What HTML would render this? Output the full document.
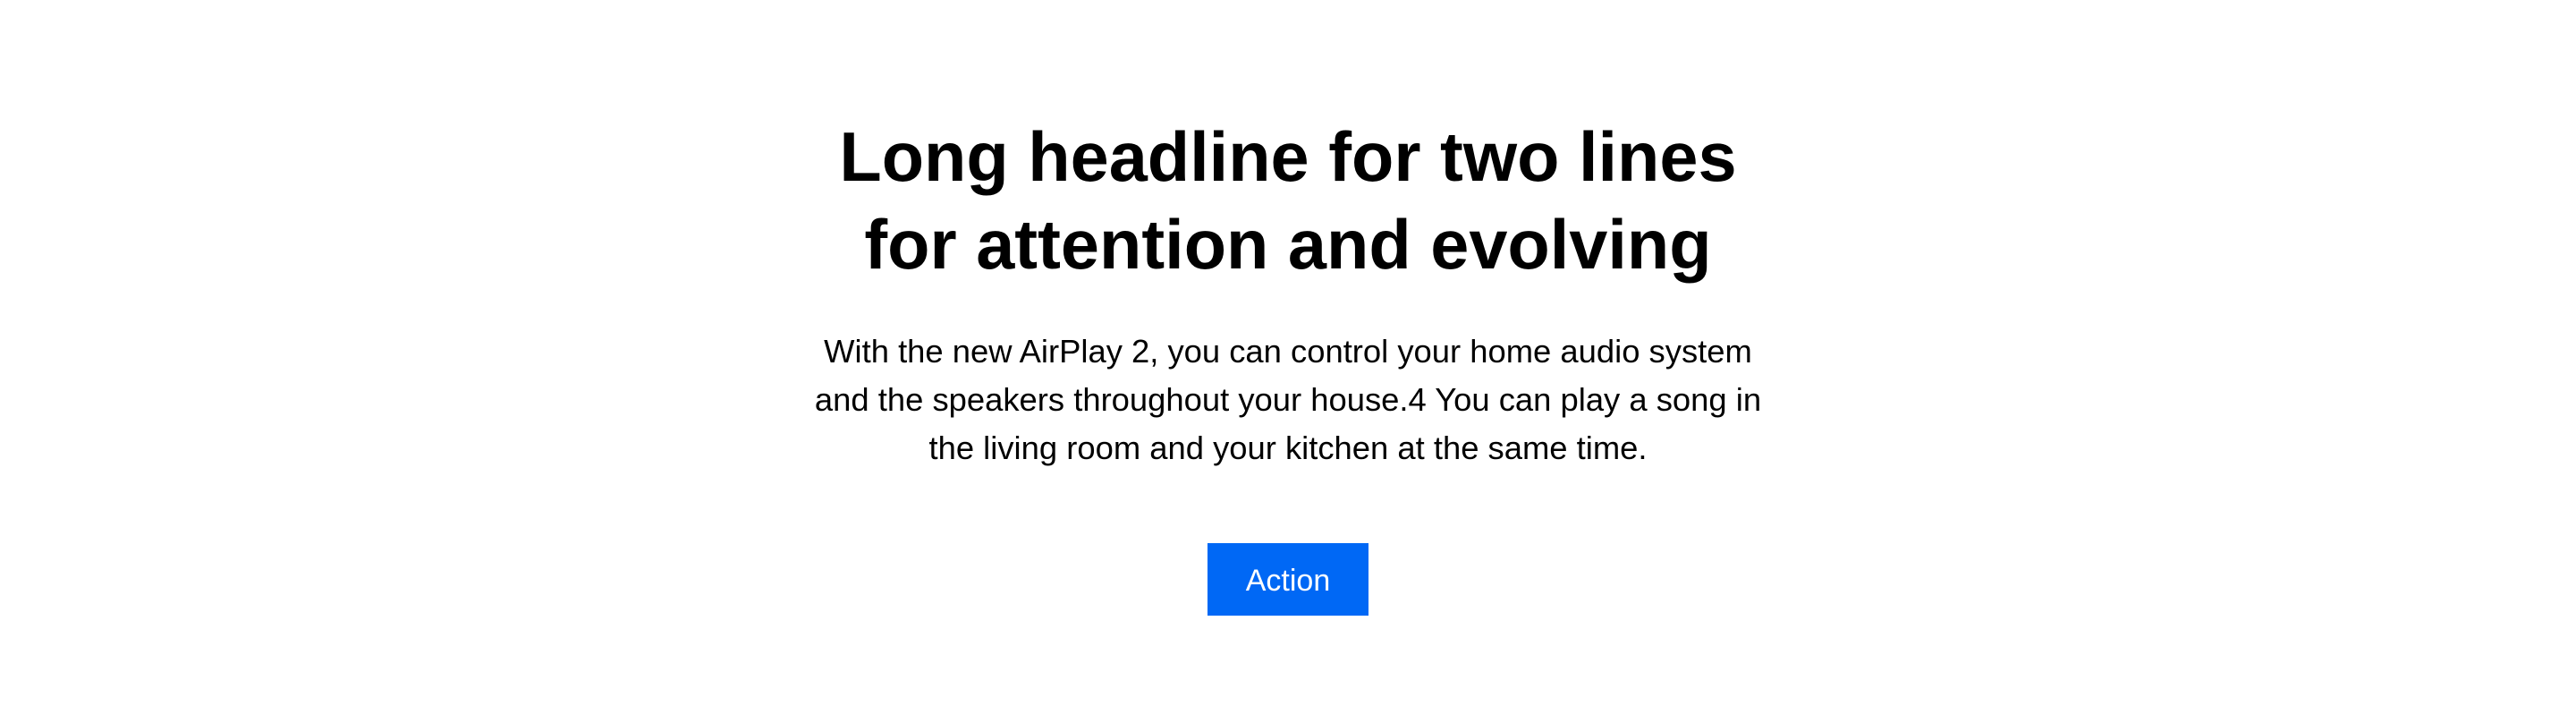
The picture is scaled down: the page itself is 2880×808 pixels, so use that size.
<!DOCTYPE html>
<html><head><meta charset="utf-8"><style>
html,body{margin:0;padding:0;background:#fff;width:2880px;height:808px;overflow:hidden}
body{position:relative;font-family:"Liberation Sans",Arial,sans-serif;color:#000}
h1{position:absolute;left:0;width:2880px;top:127px;margin:0;text-align:center;font-size:77.5px;line-height:98px;font-weight:bold;letter-spacing:0px}
p{position:absolute;left:840px;width:1200px;top:366px;margin:0;text-align:center;font-size:36.4px;line-height:54px}
.btn{position:absolute;left:1350px;top:607px;width:180px;height:81px;background:#0068f5;color:#fff;font-size:34px;line-height:84px;text-align:center}
</style></head><body>
<h1>Long headline for two lines<br>for attention and evolving</h1>
<p>With the new AirPlay 2, you can control your home audio system<br>and the speakers throughout your house.4 You can play a song in<br>the living room and your kitchen at the same time.</p>
<div class="btn">Action</div>
</body></html>
